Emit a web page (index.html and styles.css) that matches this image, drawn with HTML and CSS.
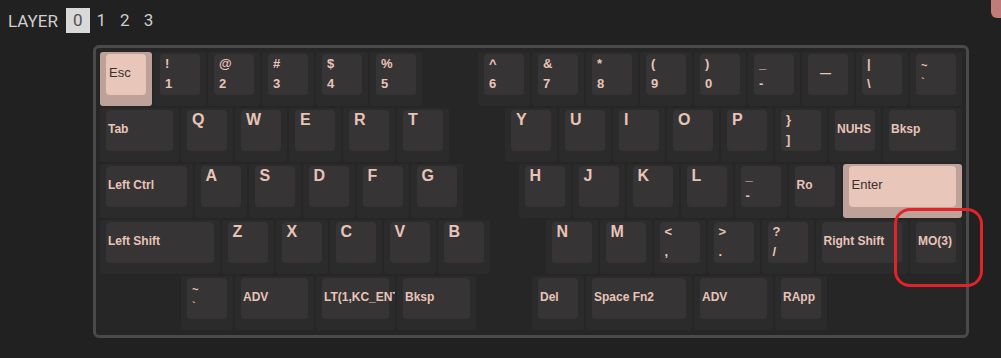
FILE: index.html
```html
<!DOCTYPE html>
<html lang="en">
<head>
    <meta charset="UTF-8">
    <meta name="viewport" content="width=device-width, initial-scale=1.0">
    <title>Keymap</title>
    <link rel="stylesheet" href="styles.css">
</head>
<body>
    <div class="layers">
        <span class="layers-title">LAYER</span>
        <span class="layer active">0</span>
        <span class="layer">1</span>
        <span class="layer">2</span>
        <span class="layer">3</span>
    </div>

    <div class="board">
        <!-- row 1 -->
        <div class="row">
            <div class="key u1 hl"><div class="cap word">Esc</div></div>
            <div class="key u1"><div class="cap pair"><span>!</span><span>1</span></div></div>
            <div class="key u1"><div class="cap pair"><span>@</span><span>2</span></div></div>
            <div class="key u1"><div class="cap pair"><span>#</span><span>3</span></div></div>
            <div class="key u1"><div class="cap pair"><span>$</span><span>4</span></div></div>
            <div class="key u1"><div class="cap pair"><span>%</span><span>5</span></div></div>
            <div class="gap s1"></div>
            <div class="key u1"><div class="cap pair"><span>^</span><span>6</span></div></div>
            <div class="key u1"><div class="cap pair"><span>&amp;</span><span>7</span></div></div>
            <div class="key u1"><div class="cap pair"><span>*</span><span>8</span></div></div>
            <div class="key u1"><div class="cap pair"><span>(</span><span>9</span></div></div>
            <div class="key u1"><div class="cap pair"><span>)</span><span>0</span></div></div>
            <div class="key u1"><div class="cap pair"><span>_</span><span>-</span></div></div>
            <div class="key u1"><div class="cap word dash">—</div></div>
            <div class="key u1"><div class="cap pair"><span>|</span><span>\</span></div></div>
            <div class="key u1"><div class="cap pair small"><span>~</span><span>`</span></div></div>
        </div>

        <!-- row 2 -->
        <div class="row">
            <div class="key u15"><div class="cap word">Tab</div></div>
            <div class="key u1"><div class="cap char">Q</div></div>
            <div class="key u1"><div class="cap char">W</div></div>
            <div class="key u1"><div class="cap char">E</div></div>
            <div class="key u1"><div class="cap char">R</div></div>
            <div class="key u1"><div class="cap char">T</div></div>
            <div class="gap s1"></div>
            <div class="key u1"><div class="cap char">Y</div></div>
            <div class="key u1"><div class="cap char">U</div></div>
            <div class="key u1"><div class="cap char">I</div></div>
            <div class="key u1"><div class="cap char">O</div></div>
            <div class="key u1"><div class="cap char">P</div></div>
            <div class="key u1"><div class="cap pair"><span>}</span><span>]</span></div></div>
            <div class="key u1"><div class="cap word">NUHS</div></div>
            <div class="key u15"><div class="cap word">Bksp</div></div>
        </div>

        <!-- row 3 -->
        <div class="row">
            <div class="key u175"><div class="cap word">Left Ctrl</div></div>
            <div class="key u1"><div class="cap char">A</div></div>
            <div class="key u1"><div class="cap char">S</div></div>
            <div class="key u1"><div class="cap char">D</div></div>
            <div class="key u1"><div class="cap char">F</div></div>
            <div class="key u1"><div class="cap char">G</div></div>
            <div class="gap s1"></div>
            <div class="key u1"><div class="cap char">H</div></div>
            <div class="key u1"><div class="cap char">J</div></div>
            <div class="key u1"><div class="cap char">K</div></div>
            <div class="key u1"><div class="cap char">L</div></div>
            <div class="key u1"><div class="cap pair"><span>_</span><span>-</span></div></div>
            <div class="key u1"><div class="cap word">Ro</div></div>
            <div class="key u225 hl"><div class="cap word">Enter</div></div>
        </div>

        <!-- row 4 -->
        <div class="row">
            <div class="key u225"><div class="cap word">Left Shift</div></div>
            <div class="key u1"><div class="cap char">Z</div></div>
            <div class="key u1"><div class="cap char">X</div></div>
            <div class="key u1"><div class="cap char">C</div></div>
            <div class="key u1"><div class="cap char">V</div></div>
            <div class="key u1"><div class="cap char">B</div></div>
            <div class="gap s1"></div>
            <div class="key u1"><div class="cap char">N</div></div>
            <div class="key u1"><div class="cap char">M</div></div>
            <div class="key u1"><div class="cap pair"><span>&lt;</span><span>,</span></div></div>
            <div class="key u1"><div class="cap pair"><span>&gt;</span><span>.</span></div></div>
            <div class="key u1"><div class="cap pair"><span>?</span><span>/</span></div></div>
            <div class="key u175"><div class="cap word">Right Shift</div></div>
            <div class="key u1"><div class="cap word">MO(3)</div></div>
        </div>

        <!-- row 5 -->
        <div class="row">
            <div class="gap s15"></div>
            <div class="key u1"><div class="cap pair small"><span>~</span><span>`</span></div></div>
            <div class="key u15"><div class="cap word">ADV</div></div>
            <div class="key u15"><div class="cap word">LT(1,KC_ENT)</div></div>
            <div class="key u15"><div class="cap word">Bksp</div></div>
            <div class="gap s1"></div>
            <div class="key u1"><div class="cap word">Del</div></div>
            <div class="key u2"><div class="cap word">Space Fn2</div></div>
            <div class="key u15"><div class="cap word">ADV</div></div>
            <div class="key u1"><div class="cap word">RApp</div></div>
        </div>
    </div>

    <div class="mark"></div>
    <div class="corner"></div>
</body>
</html>
```

FILE: styles.css
```css
body {
    margin: 0;
    background-color: #212121;
    font-family: "Liberation Sans", Arial, sans-serif;
    color: #e8c4b8;
}

.layers {
    display: flex;
    align-items: center;
    height: 25px;
    padding: 8px 0 0 8px;
    font-family: Roboto, "Liberation Sans", sans-serif;
    font-size: 17px;
    color: #cfcfcf;
}

.layers-title {
    margin-right: 8px;
}

.layer {
    padding: 0 7px;
    line-height: 25px;
}

.layer.active {
    background-color: #d9d9d9;
    color: #505050;
}

.board {
    display: flex;
    flex-direction: column;
    gap: 2px;
    width: 862px;
    margin: 12px 0 0 93px;
    padding: 4px 4px 5px 4px;
    border: 3px solid #4a4a4a;
    border-radius: 6px;
    background-color: #262626;
}

.row {
    display: flex;
    gap: 2px;
    height: 54px;
}

.gap.s1 { width: 52px; }
.gap.s15 { width: 79px; }

.key {
    flex: none;
    height: 54px;
    box-sizing: border-box;
    padding: 2px 6px 11px 6px;
    background-color: #2c2b2c;
    border-radius: 3px;
    overflow: hidden;
}

.u1 { width: 52px; }
.u15 { width: 79px; }
.u175 { width: 92.5px; }
.u2 { width: 106px; }
.u225 { width: 119.5px; }

.cap {
    height: 100%;
    box-sizing: border-box;
    background-color: #363435;
    border-radius: 4px;
    white-space: nowrap;
}

.cap.char {
    padding: 1px 5px;
    font-size: 16px;
    font-weight: bold;
    line-height: 18px;
}

.cap.pair {
    display: flex;
    flex-direction: column;
    padding: 0 5px;
    font-size: 13px;
    font-weight: bold;
    line-height: 20px;
}

.cap.pair.small {
    font-size: 11px;
    line-height: 16px;
    padding-top: 3px;
}

.cap.word {
    display: flex;
    align-items: center;
    padding: 0 2px 4px 2px;
    font-size: 12px;
    font-weight: bold;
}

.cap.dash {
    padding-left: 12px;
    font-size: 11px;
}

.key.hl {
    background-color: #bea198;
}

.key.hl .cap {
    background-color: #e8c6ba;
    color: #3a302d;
    font-weight: normal;
    font-size: 13px;
    padding-left: 3px;
}

.mark {
    position: absolute;
    left: 894px;
    top: 208px;
    width: 83px;
    height: 73px;
    border: 3px solid #e3222a;
    border-radius: 16px;
}

.corner {
    position: absolute;
    right: 0;
    top: 0;
    width: 10px;
    height: 18px;
    background-color: #c27b7b;
    border-bottom-left-radius: 6px;
}
```
